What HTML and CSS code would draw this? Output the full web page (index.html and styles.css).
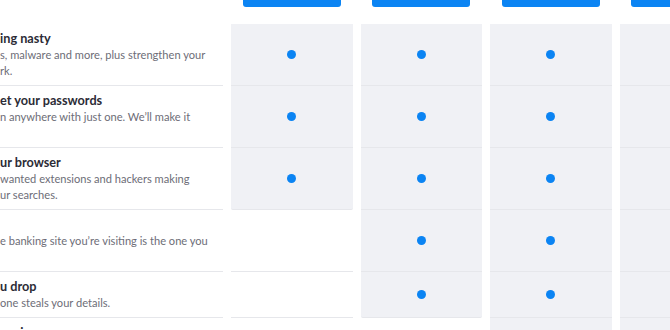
FILE: index.html
```html
<!DOCTYPE html>
<html lang="en">
<head>
<meta charset="utf-8">
<title>Compare plans</title>
<link rel="stylesheet" href="styles.css">
</head>
<body>
<div class="table">
  <div class="head"></div>
  <div class="head"><span class="btn"></span></div>
  <div class="head"><span class="btn"></span></div>
  <div class="head"><span class="btn"></span></div>
  <div class="head"><span class="btn"></span></div>

  <div class="feature">
    <div class="title">ing nasty</div>
    <div class="desc">s, malware and more, plus strengthen your</div>
    <div class="desc">rk.</div>
  </div>
  <div class="plan on"><span class="dot"></span></div>
  <div class="plan on"><span class="dot"></span></div>
  <div class="plan on"><span class="dot"></span></div>
  <div class="plan on"><span class="dot"></span></div>

  <div class="feature">
    <div class="title">et your passwords</div>
    <div class="desc">n anywhere with just one. We’ll make it</div>
    <div class="desc">&nbsp;</div>
  </div>
  <div class="plan on"><span class="dot"></span></div>
  <div class="plan on"><span class="dot"></span></div>
  <div class="plan on"><span class="dot"></span></div>
  <div class="plan on"><span class="dot"></span></div>

  <div class="feature">
    <div class="title">ur browser</div>
    <div class="desc">wanted extensions and hackers making</div>
    <div class="desc">ur searches.</div>
  </div>
  <div class="plan on last"><span class="dot"></span></div>
  <div class="plan on"><span class="dot"></span></div>
  <div class="plan on"><span class="dot"></span></div>
  <div class="plan on"><span class="dot"></span></div>

  <div class="feature">
    <div class="title">&nbsp;</div>
    <div class="desc">e banking site you’re visiting is the one you</div>
    <div class="desc">&nbsp;</div>
  </div>
  <div class="plan"></div>
  <div class="plan on"><span class="dot"></span></div>
  <div class="plan on"><span class="dot"></span></div>
  <div class="plan on"></div>

  <div class="feature">
    <div class="title">u drop</div>
    <div class="desc">one steals your details.</div>
  </div>
  <div class="plan"></div>
  <div class="plan on last"><span class="dot"></span></div>
  <div class="plan on"><span class="dot"></span></div>
  <div class="plan on"></div>

  <div class="feature">
    <div class="title">ow in more ways</div>
    <div class="desc">&nbsp;</div>
  </div>
  <div class="plan"></div>
  <div class="plan"></div>
  <div class="plan on"><span class="dot"></span></div>
  <div class="plan on"></div>
</div>
</body>
</html>
```
FILE: styles.css
```css
html, body {
  margin: 0;
  padding: 0;
  background: #ffffff;
  overflow: hidden;
  width: 670px;
  height: 330px;
}

body {
  font-family: Lato, "Open Sans", Arial, sans-serif;
}

.table {
  display: grid;
  grid-template-columns: 223px repeat(4, 121.5px);
  column-gap: 8px;
  margin-top: -33px;
}

.head {
  padding-bottom: 17px;
  display: flex;
  justify-content: center;
}

.btn {
  display: block;
  width: 98px;
  height: 40px;
  background: #0b84f3;
  border-radius: 3px;
}

.feature {
  padding: 6px 0;
  border-bottom: 1px solid #e6e7eb;
  white-space: nowrap;
}

.title {
  font-size: 12.7px;
  line-height: 17px;
  font-weight: 700;
  color: #2c2c36;
}

.desc {
  font-size: 11.1px;
  line-height: 16px;
  color: #6d6d77;
}

.plan {
  border-bottom: 1px solid #e6e7eb;
  display: flex;
  align-items: center;
  justify-content: center;
}

.plan.on {
  background: #f0f1f5;
}

.plan.last {
  border-bottom-left-radius: 2px;
  border-bottom-right-radius: 2px;
}

.dot {
  width: 9px;
  height: 9px;
  border-radius: 50%;
  background: #0b84f3;
}
```
